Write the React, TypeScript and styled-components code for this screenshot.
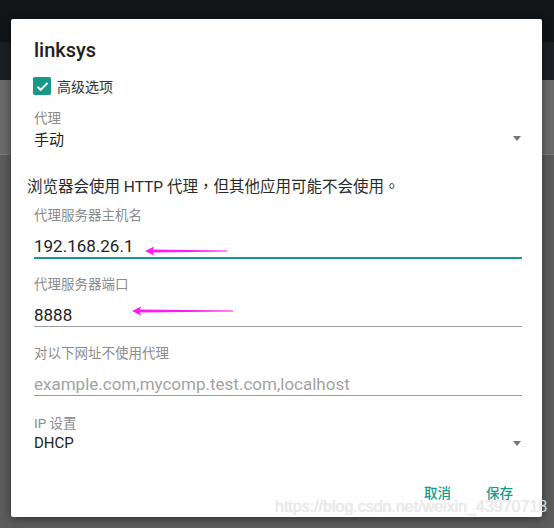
import styled, { createGlobalStyle } from "styled-components";

const GlobalStyle = createGlobalStyle`
  html, body {
    margin: 0;
    padding: 0;
  }
  body {
    font-family: Roboto, "Noto Sans CJK SC", "Noto Sans", sans-serif;
    background: #5b5b5b;
  }
`;

// 배경: 위쪽은 어두운 앱바, 아래는 딤 처리된 회색
const Screen = styled.div`
  position: relative;
  width: 554px;
  height: 528px;
  box-sizing: border-box;
  padding: 19px 0 0 11px;
  overflow: hidden;
  background: linear-gradient(
    to bottom,
    #111518 0px,
    #111518 42px,
    #1b1f23 42px,
    #1b1f23 80px,
    #6a6a6a 80px,
    #6a6a6a 154px,
    #7a7a7a 154px,
    #7a7a7a 155px,
    #5c5c5c 155px
  );
`;

const Dialog = styled.div`
  position: relative;
  width: 531px;
  height: 498px;
  box-sizing: border-box;
  padding: 19px 20px 0 23px;
  background: #fff;
  border-radius: 2px;
  box-shadow: 0 2px 10px rgba(0, 0, 0, 0.45);
  display: flex;
  flex-direction: column;
`;

const Title = styled.div`
  font-size: 20px;
  line-height: 24px;
  font-weight: 500;
  color: #212121;
`;

const CheckRow = styled.label`
  margin-top: 12px;
  height: 24px;
  display: flex;
  align-items: center;
  gap: 6px;
  font-size: 14px;
  color: #333;
`;

const CheckBox = styled.span`
  width: 18px;
  height: 18px;
  margin-left: -1px;
  border-radius: 2px;
  background: #17998a;
  display: flex;
  align-items: center;
  justify-content: center;
  svg {
    width: 15px;
    height: 15px;
  }
`;

const Block = styled.div<{ $top: number }>`
  margin-top: ${(p) => p.$top}px;
  display: flex;
  flex-direction: column;
`;

const Label = styled.div`
  font-size: 13.5px;
  line-height: 16px;
  color: #8c8c8c;
`;

const SpinnerValue = styled.div`
  margin-top: 2px;
  height: 20px;
  display: flex;
  align-items: center;
  justify-content: space-between;
  font-size: 15px;
  color: #222;
`;

const Caret = styled.span`
  width: 0;
  height: 0;
  margin-right: 1px;
  border-left: 4.5px solid transparent;
  border-right: 4.5px solid transparent;
  border-top: 5px solid #757575;
`;

const Note = styled.div`
  margin-top: 29px;
  margin-left: -7px;
  font-family: Roboto, "Noto Sans CJK TC", sans-serif;
  font-size: 15.5px;
  line-height: 20px;
  color: #2a2a2a;
`;

const Input = styled.div<{ $focused?: boolean; $placeholder?: boolean }>`
  position: relative;
  margin-top: 12px;
  height: 22px;
  font-size: 17px;
  line-height: 22px;
  color: ${(p) => (p.$placeholder ? "#a3a3a3" : "#222")};
  border-bottom: ${(p) => (p.$focused ? "2px solid #17998a" : "1px solid #9e9e9e")};
`;

const Arrow = styled.svg`
  position: absolute;
  height: 12px;
  overflow: visible;
`;

const Actions = styled.div`
  margin-top: 31px;
  display: flex;
  justify-content: flex-end;
  gap: 35px;
  padding-right: 9px;
`;

const ActionButton = styled.button`
  border: none;
  background: none;
  padding: 0;
  font-family: inherit;
  font-size: 13.5px;
  line-height: 18px;
  font-weight: 500;
  color: #17998a;
  cursor: pointer;
`;

const Watermark = styled.div`
  position: absolute;
  left: 275px;
  top: 498px;
  font-family: "Liberation Sans", Arial, sans-serif;
  font-size: 16px;
  line-height: 18px;
  color: rgba(238, 238, 238, 0.9);
  text-shadow: 0 0 1px rgba(110, 110, 110, 0.3);
  white-space: nowrap;
  pointer-events: none;
`;

function PinkArrow({ left, top, length }: { left: number; top: number; length: number }) {
  return (
    <Arrow style={{ left, top }} width={length} viewBox={`0 0 ${length} 12`}>
      <polygon
        points={`0,6 9,1.5 8,4.6 ${length},5.5 ${length},6.5 8,7.4 9,10.5`}
        fill="#ff1cf2"
      />
    </Arrow>
  );
}

export default function App() {
  return (
    <>
      <GlobalStyle />
      <Screen>
        <Dialog>
          <Title>linksys</Title>
          <CheckRow>
            <CheckBox>
              <svg viewBox="0 0 24 24" fill="none" stroke="#fff" strokeWidth="3.2">
                <path d="M4 12.5l5 5L20 6.5" />
              </svg>
            </CheckBox>
            高级选项
          </CheckRow>

          <Block $top={12}>
            <Label>代理</Label>
            <SpinnerValue>
              手动
              <Caret />
            </SpinnerValue>
          </Block>

          <Note>浏览器会使用 HTTP 代理，但其他应用可能不会使用。</Note>

          <Block $top={10}>
            <Label>代理服务器主机名</Label>
            <Input $focused>
              192.168.26.1
              <PinkArrow left={111} top={10} length={82} />
            </Input>
          </Block>

          <Block $top={17}>
            <Label>代理服务器端口</Label>
            <Input>
              8888
              <PinkArrow left={98} top={1} length={101} />
            </Input>
          </Block>

          <Block $top={18}>
            <Label>对以下网址不使用代理</Label>
            <Input $placeholder>example.com,mycomp.test.com,localhost</Input>
          </Block>

          <Block $top={19}>
            <Label>IP 设置</Label>
            <SpinnerValue>
              DHCP
              <Caret />
            </SpinnerValue>
          </Block>

          <Actions>
            <ActionButton>取消</ActionButton>
            <ActionButton>保存</ActionButton>
          </Actions>
        </Dialog>
        <Watermark>https://blog.csdn.net/weixin_43970718</Watermark>
      </Screen>
    </>
  );
}
